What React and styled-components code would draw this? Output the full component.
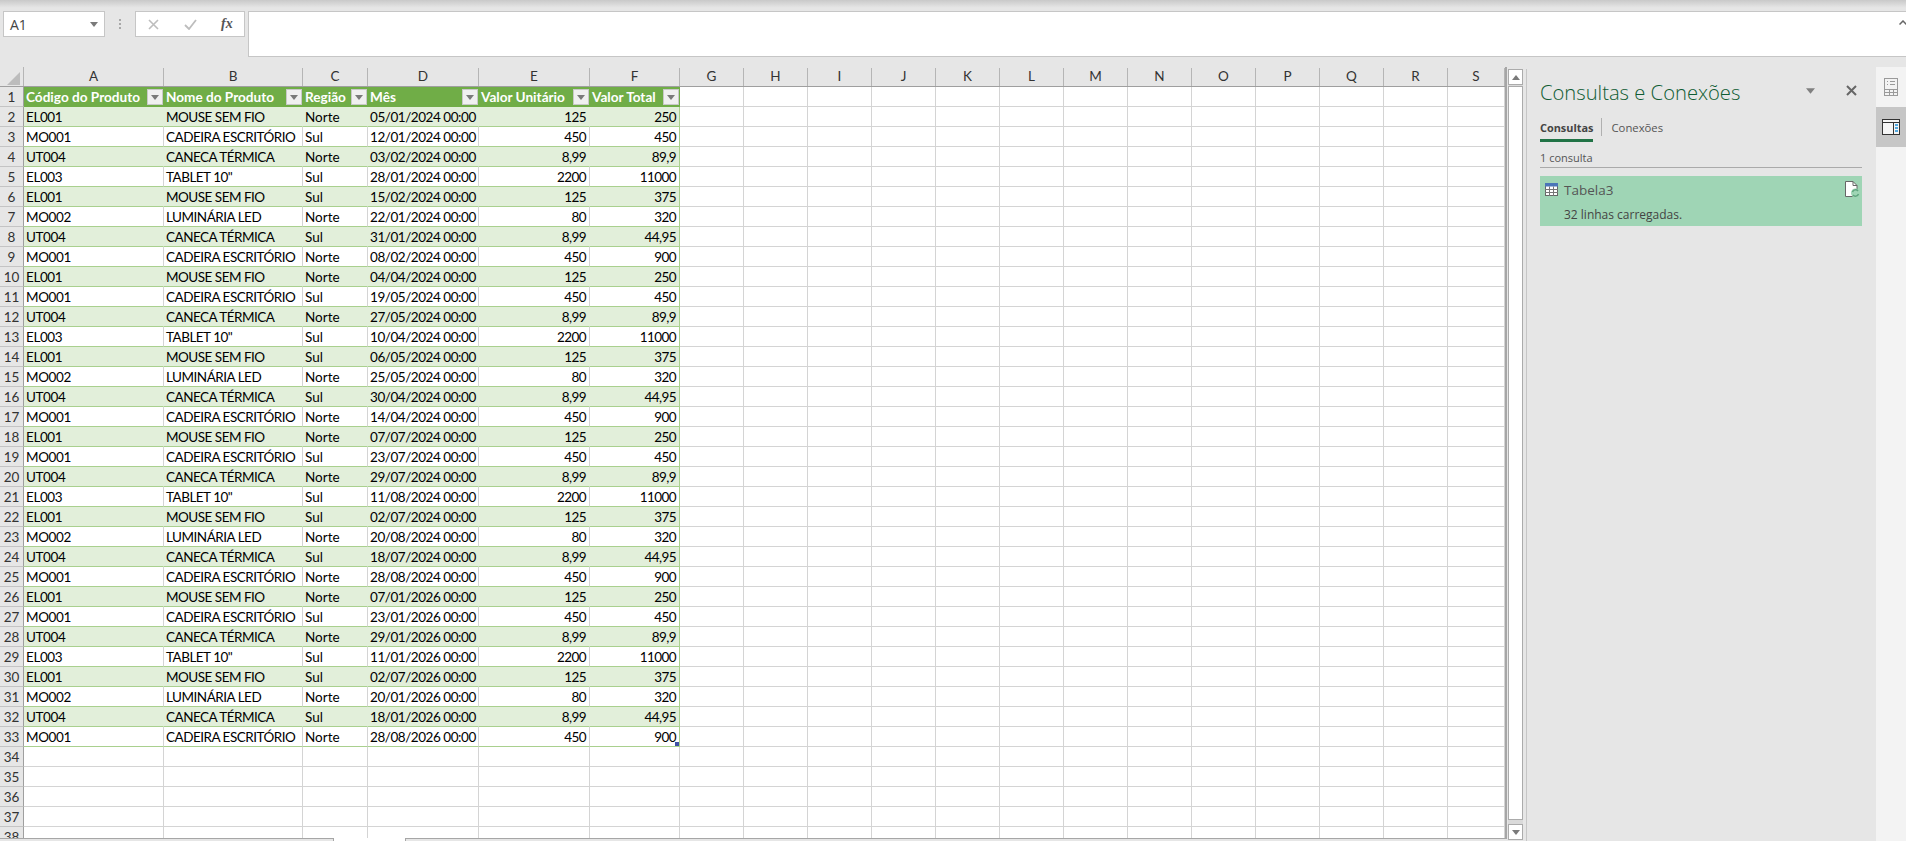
import React from "react";
import styled, { createGlobalStyle } from "styled-components";

const GlobalStyle = createGlobalStyle`
    html, body {
        margin: 0;
        padding: 0;
        width: 1906px;
        height: 841px;
        overflow: hidden;
        background: #e6e6e6;
    }
    * {
        box-sizing: border-box;
    }
`

const COLUMNS = "24px 140px 139px 65px 111px 111px 90px repeat(12, 64px) 57px"
const CELL_FONT = `"Lato", "Liberation Sans", sans-serif`
const UI_FONT = `"Open Sans", "Noto Sans", sans-serif`

const Page = styled.div`
    width: 1906px;
    height: 841px;
    display: flex;
    flex-direction: column;
    background: #e6e6e6;
    overflow: hidden;
`
const TopShade = styled.div`
    height: 11px;
    flex: none;
    background: linear-gradient(#c9c9c9, #e6e6e6 70%);
`
const FormulaBar = styled.div`
    height: 45px;
    flex: none;
    display: flex;
    align-items: flex-start;
    padding-left: 3px;
`
const NameBox = styled.div`
    width: 102px;
    height: 26px;
    background: #fff;
    border: 1px solid #c6c6c6;
    display: flex;
    align-items: center;
    justify-content: space-between;
    padding: 0 6px 0 6px;
    font-family: ${UI_FONT};
    font-size: 14px;
    color: #444;
`
const Grip = styled.div`
    width: 30px;
    height: 26px;
    display: flex;
    flex-direction: column;
    align-items: center;
    justify-content: center;
    gap: 2px;
    i {
        width: 2px;
        height: 2px;
        background: #a8a8a8;
    }
`
const FxBox = styled.div`
    width: 110px;
    height: 26px;
    background: #fff;
    border: 1px solid #c6c6c6;
    display: flex;
    align-items: center;
    padding-left: 12px;
`
const FxButton = styled.div`
    width: ${(props) => props.$w}px;
    display: flex;
    align-items: center;
    color: #555;
    font-family: "Liberation Serif", serif;
    font-style: italic;
    font-weight: 700;
    font-size: 14px;
`
const FormulaInput = styled.div`
    position: relative;
    width: 1658px;
    height: 46px;
    margin-left: 3px;
    background: #fff;
    border: 1px solid #c6c6c6;
    border-right: none;
`
const Collapse = styled.svg`
    position: absolute;
    right: -1px;
    top: 8px;
`
const Main = styled.div`
    flex: 1;
    display: flex;
    padding-top: 11px;
    min-height: 0;
`
const SheetArea = styled.div`
    width: 1526px;
    flex: none;
    display: flex;
    flex-direction: column;
`
const SheetRow = styled.div`
    height: 771px;
    flex: none;
    display: flex;
`
const Sheet = styled.div`
    width: 1507px;
    height: 771px;
    overflow: hidden;
    border-right: 2px solid #a6a6a6;
    background: #fff;
    font-family: ${CELL_FONT};
    font-size: 13.5px;
    color: #000;
`
const ColHeadRow = styled.div`
    display: grid;
    grid-template-columns: ${COLUMNS};
    height: 20px;
    background: #e6e6e6;
    border-bottom: 1px solid #9f9f9f;
`
const ColHead = styled.div`
    border-right: 1px solid #b5b5b5;
    margin-top: 1px;
    text-align: center;
    line-height: 17px;
    color: #333;
`
const Corner = styled.div`
    border-right: 1px solid #b5b5b5;
    display: flex;
    align-items: flex-end;
    justify-content: flex-end;
    padding: 0 3px 1px 0;
`
const Row = styled.div`
    display: grid;
    grid-template-columns: ${COLUMNS};
    height: 20px;
    line-height: 18px;
`
const RowHead = styled.div`
    padding-top: 1px;
    background: #e6e6e6;
    border-right: 1px solid #9f9f9f;
    border-bottom: 1px solid #c4c4c4;
    text-align: center;
    color: #333;
`
const Cell = styled.div`
    position: relative;
    padding: 1px ${(props) => (props.$right ? 3 : 2)}px 0 2px;
    white-space: nowrap;
    letter-spacing: ${(props) => props.$tight || 0}px;
    text-align: ${(props) => (props.$right ? "right" : "left")};
    background: ${(props) => (props.$band ? "#e2efda" : "#fff")};
    border-bottom: 1px solid ${(props) => (props.$table ? "#a9d08e" : "#d4d4d4")};
    border-right: 1px solid ${(props) => {
        if (props.$last) return "#a9d08e"
        if (props.$band) return "#e2efda"
        return "#d4d4d4"
    }};
`
const HeaderCell = styled.div`
    display: flex;
    align-items: center;
    justify-content: space-between;
    padding: 0 1px 0 2px;
    background: #70ad47;
    color: #fff;
    font-size: 13.6px;
    font-weight: 700;
    white-space: nowrap;
`
const FilterButton = styled.div`
    width: 16px;
    height: 16px;
    flex: none;
    display: flex;
    align-items: center;
    justify-content: center;
    background: #f0f0f0;
    border: 1px solid #c9c9c9;
`
const ResizeHandle = styled.div`
    position: absolute;
    right: 0;
    bottom: 0;
    width: 4px;
    height: 4px;
    background: #3f51a5;
`
const ScrollBar = styled.div`
    width: 15px;
    height: 771px;
    margin: 2px 0 0 1px;
    display: flex;
    flex-direction: column;
    background: #dadada;
`
const ScrollButton = styled.div`
    width: 15px;
    height: 16px;
    flex: none;
    display: flex;
    align-items: center;
    justify-content: center;
    background: #fff;
    border: 1px solid #ababab;
`
const ScrollThumb = styled.div`
    height: 734px;
    margin-top: 1px;
    flex: none;
    background: #fff;
    border: 1px solid #ababab;
`
const ScrollTrack = styled.div`
    flex: 1;
`
const TabStrip = styled.div`
    height: 3px;
    flex: none;
    display: flex;
`
const TabEdge = styled.div`
    width: ${(props) => props.$w}px;
    height: 3px;
    border-top: 1px solid #a6a6a6;
    border-right: ${(props) => (props.$closed ? "1px solid #a6a6a6" : "none")};
    border-left: ${(props) => (props.$open ? "1px solid #a6a6a6" : "none")};
`
const ActiveTab = styled.div`
    width: 71px;
    height: 3px;
    background: #fff;
`
const Panel = styled.div`
    width: 350px;
    flex: none;
    margin-top: 2px;
    border-left: 1px solid #c6c6c6;
    padding: 0 14px 0 13px;
    font-family: ${UI_FONT};
    color: #444;
`
const PanelHead = styled.div`
    height: 46px;
    display: flex;
    align-items: center;
    justify-content: space-between;
`
const PanelTitle = styled.div`
    margin-top: -1px;
    font-size: 20.2px;
    font-weight: 300;
    color: #0f5c33;
    white-space: nowrap;
`
const PanelActions = styled.div`
    display: flex;
    align-items: center;
    gap: 31px;
    margin-right: 5px;
    margin-top: -3px;
`
const Tabs = styled.div`
    display: flex;
    align-items: flex-start;
    height: 28px;
    font-size: 11.3px;
`
const PanelTab = styled.div`
    height: 27px;
    line-height: 25px;
    font-size: ${(props) => (props.$active ? "10.9px" : "11.3px")};
    font-weight: ${(props) => (props.$active ? 700 : 400)};
    color: ${(props) => (props.$active ? "#444" : "#555")};
    border-bottom: 3px solid ${(props) => (props.$active ? "#217346" : "transparent")};
`
const TabDivider = styled.div`
    width: 1px;
    height: 18px;
    margin: 3px 9px 0 8px;
    background: #b0b0b0;
`
const CountLine = styled.div`
    height: 25px;
    line-height: 29px;
    font-size: 11px;
    border-bottom: 1px solid #aaa;
    color: #555;
`
const QueryCard = styled.div`
    height: 50px;
    margin-top: 8px;
    background: #9fd5b5;
    display: grid;
    grid-template-columns: 19px 1fr 17px;
    padding: 7px 0 0 5px;
`
const QueryName = styled.div`
    font-size: 13.5px;
    line-height: 14px;
    color: #555;
`
const QueryInfo = styled.div`
    grid-column: 2;
    font-size: 12px;
    line-height: 16px;
    margin-top: 5px;
    color: #444;
`
const DocIcon = styled.svg`
    margin-top: -2px;
`
const SideStrip = styled.div`
    width: 30px;
    flex: none;
    background: #f3f3f3;
`
const SideButton = styled.div`
    height: 40px;
    display: flex;
    align-items: center;
    justify-content: center;
    background: ${(props) => (props.$active ? "#c6c6c6" : "#f3f3f3")};
`

const Arrow = ({ size = 7, color = "#7a7a7a", up }) => (
    <svg width={size} height={Math.ceil(size / 2) + 1} viewBox="0 0 8 5">
        <path d={up ? "M0 5 L4 0 L8 5 Z" : "M0 0 L8 0 L4 5 Z"} fill={color} />
    </svg>
)

const products = {
    mouse: ["EL001", "MOUSE SEM FIO"],
    cadeira: ["MO001", "CADEIRA ESCRITÓRIO"],
    caneca: ["UT004", "CANECA TÉRMICA"],
    tablet: ["EL003", 'TABLET 10"'],
    luminaria: ["MO002", "LUMINÁRIA LED"],
}

const rows = [
    ["mouse", "Norte", "05/01/2024 00:00", "125", "250"],
    ["cadeira", "Sul", "12/01/2024 00:00", "450", "450"],
    ["caneca", "Norte", "03/02/2024 00:00", "8,99", "89,9"],
    ["tablet", "Sul", "28/01/2024 00:00", "2200", "11000"],
    ["mouse", "Sul", "15/02/2024 00:00", "125", "375"],
    ["luminaria", "Norte", "22/01/2024 00:00", "80", "320"],
    ["caneca", "Sul", "31/01/2024 00:00", "8,99", "44,95"],
    ["cadeira", "Norte", "08/02/2024 00:00", "450", "900"],
    ["mouse", "Norte", "04/04/2024 00:00", "125", "250"],
    ["cadeira", "Sul", "19/05/2024 00:00", "450", "450"],
    ["caneca", "Norte", "27/05/2024 00:00", "8,99", "89,9"],
    ["tablet", "Sul", "10/04/2024 00:00", "2200", "11000"],
    ["mouse", "Sul", "06/05/2024 00:00", "125", "375"],
    ["luminaria", "Norte", "25/05/2024 00:00", "80", "320"],
    ["caneca", "Sul", "30/04/2024 00:00", "8,99", "44,95"],
    ["cadeira", "Norte", "14/04/2024 00:00", "450", "900"],
    ["mouse", "Norte", "07/07/2024 00:00", "125", "250"],
    ["cadeira", "Sul", "23/07/2024 00:00", "450", "450"],
    ["caneca", "Norte", "29/07/2024 00:00", "8,99", "89,9"],
    ["tablet", "Sul", "11/08/2024 00:00", "2200", "11000"],
    ["mouse", "Sul", "02/07/2024 00:00", "125", "375"],
    ["luminaria", "Norte", "20/08/2024 00:00", "80", "320"],
    ["caneca", "Sul", "18/07/2024 00:00", "8,99", "44,95"],
    ["cadeira", "Norte", "28/08/2024 00:00", "450", "900"],
    ["mouse", "Norte", "07/01/2026 00:00", "125", "250"],
    ["cadeira", "Sul", "23/01/2026 00:00", "450", "450"],
    ["caneca", "Norte", "29/01/2026 00:00", "8,99", "89,9"],
    ["tablet", "Sul", "11/01/2026 00:00", "2200", "11000"],
    ["mouse", "Sul", "02/07/2026 00:00", "125", "375"],
    ["luminaria", "Norte", "20/01/2026 00:00", "80", "320"],
    ["caneca", "Sul", "18/01/2026 00:00", "8,99", "44,95"],
    ["cadeira", "Norte", "28/08/2026 00:00", "450", "900"],
]

const headers = ["Código do Produto", "Nome do Produto", "Região", "Mês", "Valor Unitário", "Valor Total"]
const letters = "ABCDEFGHIJKLMNOPQRS".split("")
const blanks = letters.slice(6)

const App = () => {
    return (
        <Page>
            <GlobalStyle />
            <TopShade />
            <FormulaBar>
                <NameBox>
                    A1
                    <Arrow size={8} />
                </NameBox>
                <Grip><i /><i /><i /></Grip>
                <FxBox>
                    <FxButton $w={36}>
                        <svg width="11" height="11" viewBox="0 0 11 11">
                            <path d="M1 1 L10 10 M10 1 L1 10" stroke="#bdbdbd" strokeWidth="1.6" fill="none" />
                        </svg>
                    </FxButton>
                    <FxButton $w={37}>
                        <svg width="13" height="11" viewBox="0 0 13 11">
                            <path d="M1 6 L5 10 L12 1" stroke="#bdbdbd" strokeWidth="1.8" fill="none" />
                        </svg>
                    </FxButton>
                    <FxButton $w={20}>fx</FxButton>
                </FxBox>
                <FormulaInput>
                    <Collapse width="8" height="5" viewBox="0 0 8 5">
                        <path d="M0.5 4.5 L4 1 L7.5 4.5" stroke="#666" strokeWidth="1.5" fill="none" />
                    </Collapse>
                </FormulaInput>
            </FormulaBar>
            <Main>
                <SheetArea>
                    <SheetRow>
                        <Sheet>
                            <ColHeadRow>
                                <Corner>
                                    <svg width="13" height="13" viewBox="0 0 13 13">
                                        <path d="M13 0 L13 13 L0 13 Z" fill="#bcbcbc" />
                                    </svg>
                                </Corner>
                                {letters.map((l) => <ColHead key={l}>{l}</ColHead>)}
                            </ColHeadRow>
                            <Row>
                                <RowHead>1</RowHead>
                                {headers.map((h) => (
                                    <HeaderCell key={h}>
                                        {h}
                                        <FilterButton><Arrow size={8} /></FilterButton>
                                    </HeaderCell>
                                ))}
                                {blanks.map((l) => <Cell key={l} />)}
                            </Row>
                            {rows.map((r, i) => {
                                const band = i % 2 === 0
                                const [code, name] = products[r[0]]
                                return (
                                    <Row key={i}>
                                        <RowHead>{i + 2}</RowHead>
                                        <Cell $table $band={band} $tight={-0.4}>{code}</Cell>
                                        <Cell $table $band={band} $tight={-0.5}>{name}</Cell>
                                        <Cell $table $band={band}>{r[1]}</Cell>
                                        <Cell $table $band={band} $right $tight={-0.45}>{r[2]}</Cell>
                                        <Cell $table $band={band} $right $tight={-0.6}>{r[3]}</Cell>
                                        <Cell $table $band={band} $last $right $tight={-0.6}>
                                            {r[4]}
                                            {i === rows.length - 1 && <ResizeHandle />}
                                        </Cell>
                                        {blanks.map((l) => <Cell key={l} />)}
                                    </Row>
                                )
                            })}
                            {[34, 35, 36, 37, 38].map((n) => (
                                <Row key={n}>
                                    <RowHead>{n}</RowHead>
                                    {letters.map((l) => <Cell key={l} />)}
                                </Row>
                            ))}
                        </Sheet>
                        <ScrollBar>
                            <ScrollButton><Arrow size={8} up /></ScrollButton>
                            <ScrollThumb />
                            <ScrollTrack />
                            <ScrollButton><Arrow size={8} /></ScrollButton>
                        </ScrollBar>
                    </SheetRow>
                    <TabStrip>
                        <TabEdge $w={334} $closed />
                        <ActiveTab />
                        <TabEdge $w={1102} $open />
                    </TabStrip>
                </SheetArea>
                <Panel>
                    <PanelHead>
                        <PanelTitle>Consultas e Conexões</PanelTitle>
                        <PanelActions>
                            <Arrow size={9} color="#808080" />
                            <svg width="11" height="11" viewBox="0 0 11 11">
                                <path d="M1 1 L10 10 M10 1 L1 10" stroke="#666" strokeWidth="2" fill="none" />
                            </svg>
                        </PanelActions>
                    </PanelHead>
                    <Tabs>
                        <PanelTab $active>Consultas</PanelTab>
                        <TabDivider />
                        <PanelTab>Conexões</PanelTab>
                    </Tabs>
                    <CountLine>1 consulta</CountLine>
                    <QueryCard>
                        <svg width="13" height="13" viewBox="0 0 13 13">
                            <rect x="0.5" y="0.5" width="12" height="12" fill="#fff" stroke="#666" />
                            <rect x="0" y="0" width="13" height="3.5" fill="#4a76b8" />
                            <path d="M0 6.5 H13 M0 9.5 H13 M4.5 3.5 V13 M8.5 3.5 V13" stroke="#777" />
                        </svg>
                        <QueryName>Tabela3</QueryName>
                        <DocIcon width="15" height="17" viewBox="0 0 15 17">
                            <path d="M0.5 0.5 H8 L12 4.5 V15.5 H0.5 Z" fill="#fff" stroke="#666" />
                            <path d="M8 0.5 V4.5 H12" fill="none" stroke="#666" />
                            <circle cx="10.5" cy="12" r="4.5" fill="#9fd5b5" />
                            <path d="M7.5 11 A3.2 3.2 0 0 1 13 10 M13.5 13 A3.2 3.2 0 0 1 8 14" stroke="#5fa57f" strokeWidth="1.5" fill="none" />
                        </DocIcon>
                        <QueryInfo>32 linhas carregadas.</QueryInfo>
                    </QueryCard>
                </Panel>
                <SideStrip>
                    <SideButton>
                        <svg width="14" height="18" viewBox="0 0 14 18">
                            <rect x="0.5" y="0.5" width="13" height="17" fill="none" stroke="#9a9a9a" />
                            <path d="M0.5 11.5 H13.5 M0.5 14.5 H13.5 M5.5 11.5 V17.5 M9.5 11.5 V17.5 M3 3.5 H4 M6 3.5 H11 M3 6.5 H4 M6 6.5 H11" stroke="#9a9a9a" fill="none" />
                        </svg>
                    </SideButton>
                    <SideButton $active>
                        <svg width="18" height="16" viewBox="0 0 18 16">
                            <rect x="0.5" y="0.5" width="17" height="15" fill="#f5f5f5" stroke="#333" />
                            <path d="M0.5 3.5 H17.5 M11.5 3.5 V15.5" stroke="#333" fill="none" />
                            <path d="M13 6 H16 M13 9 H16 M13 12 H16" stroke="#1e90d8" strokeWidth="1.4" fill="none" />
                        </svg>
                    </SideButton>
                </SideStrip>
            </Main>
        </Page>
    )
}

export default App
